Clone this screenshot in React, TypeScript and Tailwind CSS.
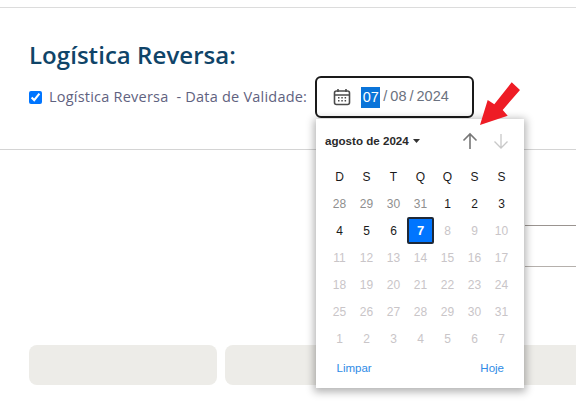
import React from "react";

const prev = ["28", "29", "30", "31"];
const days: { t: string; c: string }[] = [
  ...["D", "S", "T", "Q", "Q", "S", "S"].map((t) => ({ t, c: "text-[#1a1a1a]" })),
  ...prev.map((t) => ({ t, c: "text-[#8f8f8f]" })),
  ...["1", "2", "3", "4", "5", "6"].map((t) => ({ t, c: "text-[#1a1a1a]" })),
  { t: "7", c: "sel" },
  ...Array.from({ length: 24 }, (_, i) => ({ t: String(i + 8), c: "text-[#c9c5c8]" })),
  ...["1", "2", "3", "4", "5", "6", "7"].map((t) => ({ t, c: "text-[#c9c5c8]" })),
];

const trebuchet = "font-['Open_Sans','Noto_Sans',sans-serif]";

export default function App() {
  return (
    <div className={`relative w-[576px] h-[403px] overflow-hidden bg-white ${trebuchet}`}>
      <div className="h-[7px]" />
      <div className="h-px bg-[#dcdcdc]" />
      <div className="h-[142px] pl-[29px] pt-[32px] border-b border-[#d4d4d4]">
        <h1 className="text-[24px] leading-[30px] font-semibold text-[#0f4468] tracking-[0.05px]">Logística Reversa:</h1>
        <div className="flex items-center h-[42px] mt-[6px] text-[14.5px] text-[#5f6280]">
          <input type="checkbox" defaultChecked className="w-[13px] h-[13px] accent-[#0075ff] m-0" />
          <span className="ml-[7px] whitespace-pre tracking-[0.22px]">Logística Reversa  - Data de Validade:</span>
          <div className="ml-[8px] w-[159px] h-[42px] shrink-0 flex items-center border-2 border-[#1a1a1a] rounded-[6px] pl-[16px] font-['Liberation_Sans',sans-serif] text-[14.5px] text-[#6b7280]">
            <svg width="18" height="18" viewBox="0 0 18 18" fill="none" stroke="#4b4b4b" strokeWidth="1.6" className="shrink-0">
              <rect x="1.5" y="3" width="15" height="13.5" rx="2" />
              <path d="M1.5 7h15M5 1v3M13 1v3" />
              <path d="M5 9.8h1.500M8.300 9.800h1.500M11.600 9.800h1.500M5 12.800h1.500M8.300 12.800h1.500M11.600 12.800h1.500" strokeWidth="1.4" />
            </svg>
            <span className="ml-[10px] bg-[#0a74d9] text-white px-[1.5px] leading-[21px]">07</span>
            <span className="mx-[3px]">/</span>
            <span>08</span>
            <span className="mx-[3px]">/</span>
            <span>2024</span>
          </div>
        </div>
      </div>

      <div className="flex flex-col items-end gap-[40px] pt-[75px]">
        <div className="w-[51px] h-px bg-[#9a9490]" />
        <div className="w-[51px] h-px bg-[#b5b0ac]" />
      </div>

      <div className="flex gap-[8px] pl-[29px] pt-[78px]">
        <div className="w-[188px] h-[40px] shrink-0 rounded-[8px] bg-[#edece8]" />
        <div className="w-[360px] h-[40px] shrink-0 rounded-[8px] bg-[#edece8]" />
      </div>

      <div className="absolute left-[316px] top-[119px] w-[208px] h-[269px] bg-white shadow-[0_2px_8px_2px_rgba(0,0,0,0.3)] font-['Liberation_Sans',sans-serif] flex flex-col">
        <div className="flex items-center h-[44px] pl-[9px] pb-[1px]">
          <span className="text-[11.6px] font-bold text-[#2a2a2a]">agosto de 2024</span>
          <svg width="7" height="4" viewBox="0 0 7 4" className="ml-[4px]"><path d="M0 0h7L3.500 4z" fill="#333" /></svg>
          <svg width="16" height="18" viewBox="0 0 16 18" fill="none" stroke="#777" strokeWidth="1.6" className="ml-[42px]"><path d="M8 17V2M1.500 8.500L8 2l6.500 6.500" /></svg>
          <svg width="16" height="16" viewBox="0 0 16 16" fill="none" stroke="#c8c8c8" strokeWidth="1.3" className="ml-[15px]"><path d="M8 1v14M1.500 8.500L8 15l6.500-6.500" /></svg>
        </div>
        <div className="grid grid-cols-[repeat(7,27px)] auto-rows-[27px] pl-[10px] text-[12px]">
          {days.map((d, i) =>
            d.c === "sel" ? (
              <div key={i} className="flex items-center justify-center bg-[#0075ff] border-2 border-[#1f2937] rounded-[2px] text-white font-bold text-[13px]">{d.t}</div>
            ) : (
              <div key={i} className={`flex items-center justify-center ${d.c}`}>{d.t}</div>
            )
          )}
        </div>
        <div className="flex justify-between pl-[20.500px] pr-[20px] pt-[8px] text-[11.5px] text-[#2f8be6]">
          <span>Limpar</span>
          <span>Hoje</span>
        </div>
      </div>

      <svg width="44" height="46" viewBox="0 0 44 46" className="absolute left-[478px] top-[82px]">
        <path d="M2 43 L9.700 18 L16.300 22.300 L33.700 0.300 L42 8 L24.700 28 L29.700 33.700 Z" fill="#ee1c25" />
      </svg>
    </div>
  );
}
